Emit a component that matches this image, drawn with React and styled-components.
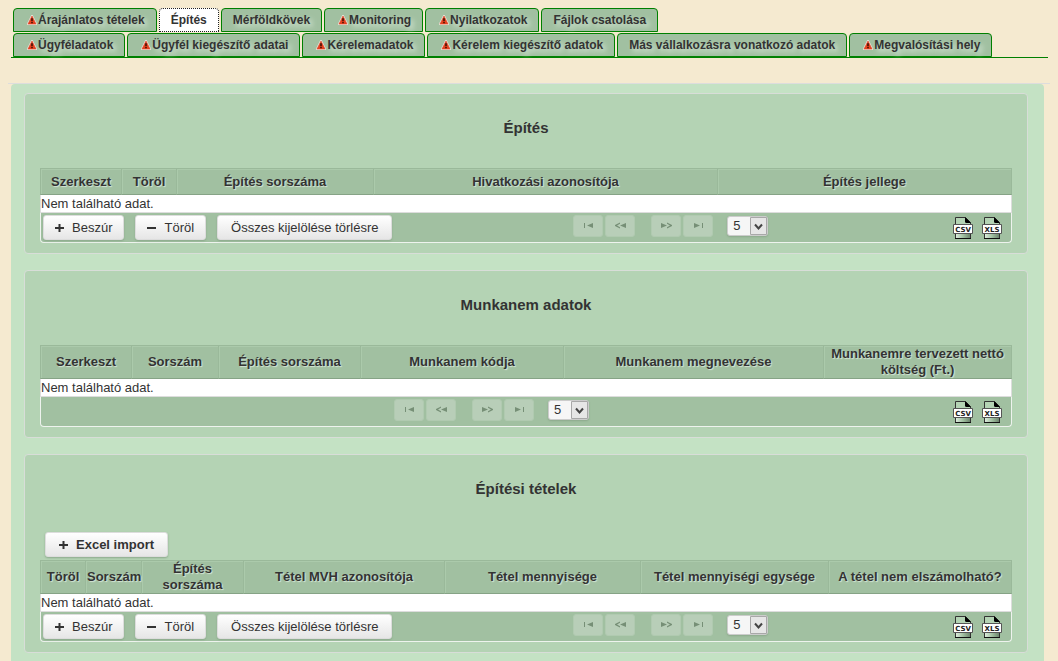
import React, { useState } from "react";
import styled, { createGlobalStyle } from "styled-components";

const GlobalStyle = createGlobalStyle`
  * {
    box-sizing: border-box;
  }
  body {
    margin: 0;
    padding: 8px 8px 0;
    height: 100vh;
    overflow: hidden;
    background: #f5ead0;
    color: #333;
    font-family: "Liberation Sans", Arial, sans-serif;
    font-size: 13px;
    line-height: 16px;
  }
`;

const Tabs = styled.nav`
  display: flex;
  flex-direction: column;
  gap: 1px;
  margin: 0 2px 0 3px;
  padding-left: 2px;
  border-bottom: 1px solid #008000;
`;

const TabRow = styled.div`
  display: flex;
  gap: 2px;
`;

const Tab = styled.button`
  display: flex;
  align-items: center;
  height: 24px;
  padding: 0 11px;
  border: 1px ${(p) => (p.$active ? "dotted #222" : "solid #008000")};
  border-radius: 4px 4px 0 0;
  background: ${(p) => (p.$active ? "#fff" : "#a1c0a1")};
  color: #333;
  font: bold 12px/16px "Liberation Sans", Arial, sans-serif;
  text-shadow: ${(p) => (p.$active ? "none" : "3px 3px 5px #d6e6d6")};
  white-space: nowrap;
`;

const WarningSvg = styled.svg`
  width: 10px;
  height: 10px;
  margin: 0 1px 0 2px;
`;

const Content = styled.main`
  margin-top: 25px;
  border-top: 1px solid #ddd;
`;

const Sheet = styled.div`
  display: flex;
  flex-direction: column;
  gap: 16px;
  margin: 0 6px 0 3px;
  padding: 9px 16px 20px 13px;
  border-radius: 4px 4px 0 0;
  background: #c4e2c4;
`;

const Panel = styled.section`
  padding: 25px 15px 10px;
  border: 1px solid #d8ddd8;
  border-radius: 4px;
  background: #b4d3b4;
`;

const Title = styled.h2`
  margin: 0 0 31px;
  font-size: 15px;
  line-height: 18px;
  text-align: center;
`;

const Grid = styled.table`
  width: 100%;
  table-layout: fixed;
  border-collapse: separate;
  border-spacing: 0;
`;

const HeadCell = styled.th`
  height: 27px;
  padding: 0 1px;
  border: 1px solid #9ab99a;
  border-width: 1px 1px 1px 0;
  border-bottom-color: #86a386;
  background: #a1c0a1;
  box-shadow: inset 1px 1px 0 #abcaab;
  text-shadow: 1px 1px 1px #d6e6d6;
  &:first-child {
    border-left-width: 1px;
  }
`;

const EmptyCell = styled.td`
  height: 18px;
  padding: 0;
  border: 1px solid #ddd;
  border-top: 0;
  background: #fff;
`;

const FootCell = styled.td`
  padding: 0;
  border: 1px solid #eef3ee;
  border-top: 0;
  border-radius: 0 0 4px 4px;
  background: #a1c0a1;
`;

const Footer = styled.div`
  display: flex;
  align-items: center;
  height: 29px;
  padding: 0 9px 0 2px;
`;

const Actions = styled.div`
  display: flex;
  gap: 11px;
  margin-right: 9px;
`;

const Button = styled.button`
  display: flex;
  align-items: center;
  gap: 8px;
  height: 25px;
  padding: 0 ${(p) => (p.$wide ? 13 : 11)}px;
  border: 1px solid #ddd;
  border-radius: 3px;
  background: linear-gradient(#fff, #e6e6e6);
  box-shadow: 0 1px 2px #8ca88c;
  color: #333;
  font: ${(p) => (p.$bold ? "bold" : "normal")} 13px/16px "Liberation Sans", Arial, sans-serif;
  white-space: nowrap;
`;

const ImportBar = styled.div`
  display: flex;
  padding: 3px 5px;
`;

const Pager = styled.div`
  display: flex;
  flex: 1;
  justify-content: center;
  gap: 2px;
  padding-bottom: 4px;
`;

const PageButton = styled.button`
  display: flex;
  align-items: center;
  justify-content: center;
  width: 30px;
  height: 22px;
  padding: 0;
  margin-left: ${(p) => (p.$apart ? 14 : 0)}px;
  border: 1px solid #b0cab0;
  border-radius: 3px;
  background: #b8ceb8;
`;

const SelectBox = styled.div`
  position: relative;
  height: 20px;
  margin: 1px 0 0 12px;
`;

const Select = styled.select`
  appearance: none;
  width: 41px;
  height: 20px;
  padding: 0 0 0 5px;
  border: 1px solid #ccc;
  border-radius: 3px;
  background: #f6f6f6;
  box-shadow: 0 1px 2px #8ca88c;
  color: #333;
  font: 13px/18px "Liberation Sans", Arial, sans-serif;
`;

const SelectArrow = styled.svg`
  position: absolute;
  top: 1px;
  right: 1px;
  width: 17px;
  height: 18px;
  pointer-events: none;
`;

const Exports = styled.div`
  display: flex;
  gap: 9px;
  padding-left: 13px;
`;

const ExportLink = styled.a`
  display: block;
  width: 20px;
  height: 24px;
`;

const Warning = () => (
  <WarningSvg viewBox="0 0 10 10" aria-hidden="true">
    <path d="M5 1 9 9H1z" fill="#f0e4dc" stroke="#f0e4dc" strokeWidth="2" strokeLinejoin="round" />
    <path d="M5 1 9 9H1z" fill="#e8401c" stroke="#d8452a" strokeWidth=".6" strokeLinejoin="round" />
    <path d="M5 3.200v3M5 7v1.200" stroke="#2a0c04" strokeWidth="1.400" />
  </WarningSvg>
);

const Plus = () => (
  <svg width="9" height="9" viewBox="0 0 9 9" aria-hidden="true">
    <path d="M0 5h9M4.5 1v8" stroke="#333" strokeWidth="2" />
  </svg>
);

const Minus = () => (
  <svg width="9" height="9" viewBox="0 0 9 9" aria-hidden="true">
    <path d="M0 5h9" stroke="#333" strokeWidth="2" />
  </svg>
);

const pageIcons = [
  { label: "Első", d: "M1 1h1v5H1zM10 1v5L4 3.5z" },
  { label: "Előző", d: "M5 .5v1.300L2 3.5l3 1.700V6.500L0 3.900v-.8zM11 1v5L5 3.5z" },
  { label: "Következő", d: "M6 .5v1.300l3 1.700-3 1.700V6.500l5-2.600v-.8zM0 1v5l6-2.5z", apart: true },
  { label: "Utolsó", d: "M9 1h1v5H9zM1 1v5l6-2.5z" },
];

const FileIcon = ({ type }) => (
  <svg width="20" height="24" viewBox="0 0 20 24" aria-hidden="true">
    <defs>
      <linearGradient id={`page-${type}`} x2="1">
        <stop offset="0" stopColor="#dcebdc" />
        <stop offset="0.5" stopColor="#a1c0a1" />
        <stop offset="1" stopColor="#6d856d" />
      </linearGradient>
    </defs>
    <path d="M2.5 1.5h10l5 5v16h-15z" fill="#b4d3b4" stroke="#333" />
    <path d="M3 18h14v4H3z" fill={`url(#page-${type})`} />
    <path d="M2 22.5h16" stroke="#111" />
    <path d="M12 1l6 6h-4.500q-1.500 0-1.500-1.500z" fill="#000" />
    <path d="M.5 8.500h19v9H.5z" fill="#fff" stroke="#555" />
    <text
      x="10"
      y="16"
      textAnchor="middle"
      fontFamily="DejaVu Sans, sans-serif"
      fontSize="7"
      fontWeight="bold"
      fill="#222"
    >
      {type}
    </text>
  </svg>
);

const tabRows = [
  [
    { label: "Árajánlatos tételek", warn: true },
    { label: "Építés" },
    { label: "Mérföldkövek" },
    { label: "Monitoring", warn: true },
    { label: "Nyilatkozatok", warn: true },
    { label: "Fájlok csatolása" },
  ],
  [
    { label: "Ügyféladatok", warn: true },
    { label: "Ügyfél kiegészítő adatai", warn: true },
    { label: "Kérelemadatok", warn: true },
    { label: "Kérelem kiegészítő adatok", warn: true },
    { label: "Más vállalkozásra vonatkozó adatok" },
    { label: "Megvalósítási hely", warn: true },
  ],
];

// column weights are relative, the table always fills its panel
const panels = [
  {
    title: "Építés",
    editable: true,
    columns: [
      ["Szerkeszt", 82],
      ["Töröl", 55],
      ["Építés sorszáma", 197],
      ["Hivatkozási azonosítója", 344],
      ["Építés jellege", 294],
    ],
  },
  {
    title: "Munkanem adatok",
    columns: [
      ["Szerkeszt", 92],
      ["Sorszám", 87],
      ["Építés sorszáma", 142],
      ["Munkanem kódja", 203],
      ["Munkanem megnevezése", 260],
      ["Munkanemre tervezett nettó költség (Ft.)", 188],
    ],
  },
  {
    title: "Építési tételek",
    editable: true,
    excel: true,
    columns: [
      ["Töröl", 46],
      ["Sorszám", 56],
      ["Építés sorszáma", 102],
      ["Tétel MVH azonosítója", 201],
      ["Tétel mennyisége", 196],
      ["Tétel mennyiségi egysége", 188],
      ["A tétel nem elszámolható?", 183],
    ],
  },
];

const DataPanel = ({ title, columns, editable, excel }) => {
  const [pageSize, setPageSize] = useState("5");
  const total = columns.reduce((sum, [, width]) => sum + width, 0);

  return (
    <Panel>
      <Title>{title}</Title>
      {excel && (
        <ImportBar>
          <Button $bold $wide>
            <Plus />
            Excel import
          </Button>
        </ImportBar>
      )}
      <Grid>
        <colgroup>
          {columns.map(([name, width]) => (
            <col key={name} style={{ width: `${(width / total) * 100}%` }} />
          ))}
        </colgroup>
        <thead>
          <tr>
            {columns.map(([name]) => (
              <HeadCell key={name} scope="col">
                {name}
              </HeadCell>
            ))}
          </tr>
        </thead>
        <tbody>
          <tr>
            <EmptyCell colSpan={columns.length}>Nem található adat.</EmptyCell>
          </tr>
        </tbody>
        <tfoot>
          <tr>
            <FootCell colSpan={columns.length}>
              <Footer>
                {editable && (
                  <Actions>
                    <Button>
                      <Plus />
                      Beszúr
                    </Button>
                    <Button>
                      <Minus />
                      Töröl
                    </Button>
                    <Button $wide>Összes kijelölése törlésre</Button>
                  </Actions>
                )}
                <Pager>
                  {pageIcons.map((icon) => (
                    <PageButton
                      key={icon.label}
                      aria-label={icon.label}
                      $apart={icon.apart}
                      disabled
                    >
                      <svg width="11" height="7" viewBox="0 0 11 7">
                        <path d={icon.d} fill="#768f76" />
                      </svg>
                    </PageButton>
                  ))}
                  <SelectBox>
                    <Select
                      aria-label="Sorok száma"
                      value={pageSize}
                      onChange={(e) => setPageSize(e.target.value)}
                    >
                      <option>5</option>
                      <option>10</option>
                      <option>20</option>
                    </Select>
                    <SelectArrow viewBox="0 0 17 18">
                      <path d="M.5.5h16v17H.5z" fill="#e6e6e6" stroke="#a8a8a8" />
                      <path d="M5 7.500l3.500 4 3.500-4" fill="none" stroke="#444" strokeWidth="2" />
                    </SelectArrow>
                  </SelectBox>
                </Pager>
                <Exports>
                  <ExportLink href="#csv" aria-label="CSV">
                    <FileIcon type="CSV" />
                  </ExportLink>
                  <ExportLink href="#xls" aria-label="XLS">
                    <FileIcon type="XLS" />
                  </ExportLink>
                </Exports>
              </Footer>
            </FootCell>
          </tr>
        </tfoot>
      </Grid>
    </Panel>
  );
};

const App = () => {
  const [active, setActive] = useState("Építés");

  return (
    <>
      <GlobalStyle />
      <Tabs>
        {tabRows.map((row, i) => (
          <TabRow key={i}>
            {row.map(({ label, warn }) => (
              <Tab key={label} $active={label === active} onClick={() => setActive(label)}>
                {warn && <Warning />}
                {label}
              </Tab>
            ))}
          </TabRow>
        ))}
      </Tabs>
      <Content>
        <Sheet>
          {panels.map((panel) => (
            <DataPanel key={panel.title} {...panel} />
          ))}
        </Sheet>
      </Content>
    </>
  );
};

export default App;
